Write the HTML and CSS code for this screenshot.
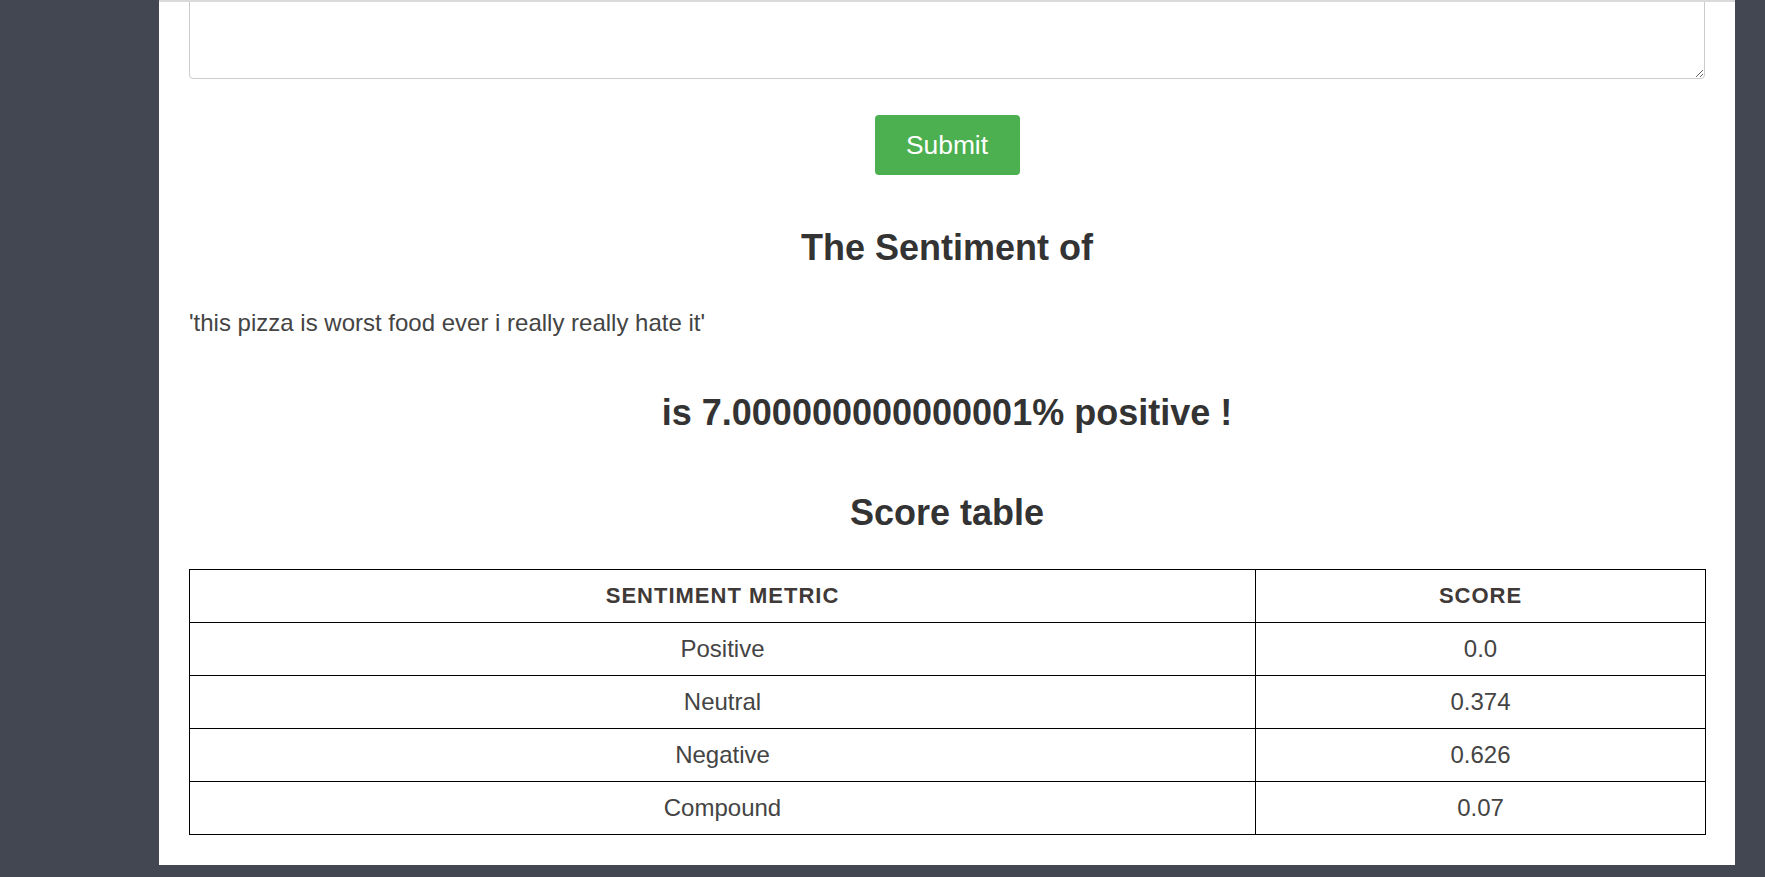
FILE: index.html
```html
<!DOCTYPE html>
<html lang="en">
<head>
<meta charset="utf-8">
<title>Sentiment Analysis</title>
<link rel="stylesheet" href="styles.css">
</head>
<body>
<main class="card">
  <form class="form">
    <textarea class="input" name="text"></textarea>
    <button type="button" class="submit">Submit</button>
  </form>
  <h2 class="title first">The Sentiment of</h2>
  <p class="quote">'this pizza is worst food ever i really really hate it'</p>
  <h2 class="title result">is 7.000000000000001% positive !</h2>
  <h2 class="title table-title">Score table</h2>
  <table class="scores">
    <colgroup>
      <col class="col-metric">
      <col class="col-score">
    </colgroup>
    <thead>
      <tr><th>Sentiment Metric</th><th>Score</th></tr>
    </thead>
    <tbody>
      <tr><td>Positive</td><td>0.0</td></tr>
      <tr><td>Neutral</td><td>0.374</td></tr>
      <tr><td>Negative</td><td>0.626</td></tr>
      <tr><td>Compound</td><td>0.07</td></tr>
    </tbody>
  </table>
</main>
</body>
</html>
```

FILE: styles.css
```css
html, body {
  margin: 0;
  padding: 0;
}
body {
  background: #424752;
  font-family: "Liberation Sans", Arial, sans-serif;
  font-size: 24px;
  color: #444;
  padding-bottom: 12px;
}
.card {
  margin-left: 159px;
  width: 1576px;
  box-sizing: border-box;
  background: #fff;
  border-top: 2px solid #dadada;
  overflow: hidden;
  padding: 0 30px 30px;
}
.form {
  display: flex;
  flex-direction: column;
  align-items: center;
}
.input {
  display: block;
  width: 100%;
  height: 150px;
  box-sizing: border-box;
  margin: -73px 0 0;
  border: 1px solid #cccccc;
  border-radius: 4px;
  background: #fff;
  font-family: inherit;
  font-size: 24px;
}
.submit {
  margin-top: 36px;
  width: 145px;
  height: 60px;
  border: 0;
  border-radius: 4px;
  background: #4caf50;
  color: #fff;
  font-family: "Liberation Sans", Arial, sans-serif;
  font-size: 26.4px;
  padding: 0;
  display: flex;
  align-items: center;
  justify-content: center;
}
.title {
  font-size: 36px;
  line-height: 42px;
  font-weight: bold;
  color: #333;
  text-align: center;
  margin: 0;
}
.first { margin-top: 52px; }
.quote {
  margin: 40px 0 0;
  line-height: 28px;
  color: #444;
}
.result { margin-top: 55px; }
.table-title { margin-top: 58px; }
.scores {
  margin-top: 35px;
  width: 100%;
  border-collapse: collapse;
  table-layout: fixed;
}
.col-metric { width: 1066px; }
.col-score { width: 450px; }
.scores th,
.scores td {
  border: 1px solid #000;
  text-align: center;
  vertical-align: middle;
  padding: 0;
  height: 52px;
  color: #444;
}
.scores th {
  font-size: 22px;
  letter-spacing: 1px;
  text-transform: uppercase;
  font-weight: bold;
  color: #3f3a38;
}
```
